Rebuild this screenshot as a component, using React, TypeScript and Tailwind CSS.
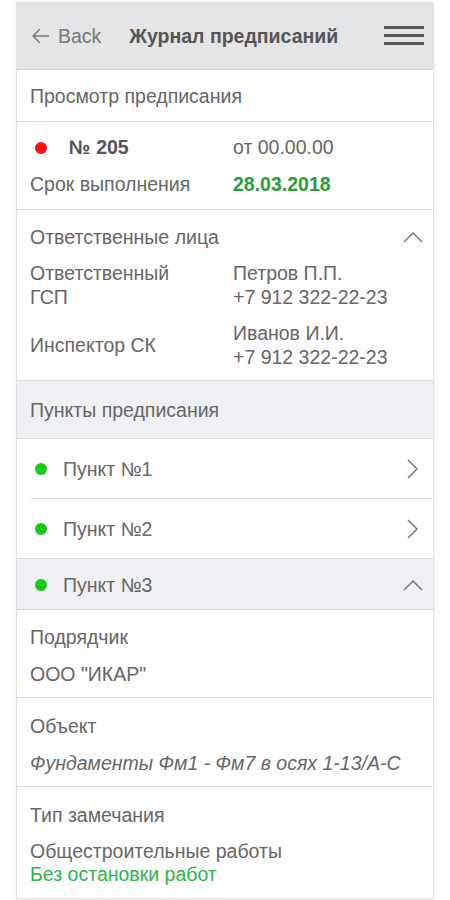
import React from "react";

const Dot = ({ color }: { color: string }) => (
  <span className={`inline-block w-[12px] h-[12px] rounded-full ${color}`} />
);

const ChevronUp = () => (
  <svg width="20" height="12" viewBox="0 0 20 12" fill="none">
    <path d="M1 11 L10 2 L19 11" stroke="#777" strokeWidth="1.5" />
  </svg>
);

const ChevronRight = () => (
  <svg width="12" height="20" viewBox="0 0 12 20" fill="none">
    <path d="M2 1 L11 10 L2 19" stroke="#777" strokeWidth="1.5" />
  </svg>
);

export default function App() {
  return (
    <div
      className="w-[450px] h-[900px] bg-white pt-[2px] px-[16px] overflow-hidden"
      style={{ fontFamily: '"Liberation Sans", Arial, sans-serif' }}
    >
      <div className="border-x border-b border-[#e2e2e2] text-[#666] text-[19.5px] leading-[24px] shadow-[0_0_3px_rgba(0,0,0,0.08)]">
        {/* Header */}
        <div className="h-[68px] bg-[#e4e5e7] flex items-center border-b border-[#d2d3d5]">
          <div className="flex items-center pl-[15px] text-[#777] text-[19.5px]">
            <svg width="18" height="16" viewBox="0 0 18 16" fill="none" className="mr-[8px]">
              <path d="M17 8 H2 M8 1 L1 8 L8 15" stroke="#777" strokeWidth="1.5" />
            </svg>
            <span>Back</span>
          </div>
          <div className="ml-[28px] text-[#555] font-bold text-[19.5px]">Журнал предписаний</div>
          <div className="ml-auto mr-[9px] flex flex-col gap-[5px]">
            <span className="block w-[40px] h-[3px] bg-[#555]" />
            <span className="block w-[40px] h-[3px] bg-[#555]" />
            <span className="block w-[40px] h-[3px] bg-[#555]" />
          </div>
        </div>

        {/* Просмотр */}
        <div className="h-[52px] flex items-center pl-[13px] pt-[1px] border-b border-[#dcdcdc]">
          Просмотр предписания
        </div>

        {/* Card */}
        <div className="pt-[13px] pb-[13px] pl-[13px] border-b border-[#dcdcdc] flex flex-col gap-[13px]">
          <div className="grid grid-cols-[203px_1fr] items-center">
            <div className="flex items-center">
              <span className="ml-[5px]"><Dot color="bg-[#ff1010]" /></span>
              <span className="ml-[22px] font-bold text-[#555]">№ 205</span>
            </div>
            <div>от 00.00.00</div>
          </div>
          <div className="grid grid-cols-[203px_1fr] items-center">
            <div>Срок выполнения</div>
            <div className="font-bold text-[#2a9d3a]">28.03.2018</div>
          </div>
        </div>

        {/* Ответственные лица */}
        <div className="pt-[15px] pb-[11px] pl-[13px] border-b border-[#dcdcdc]">
          <div className="flex items-center justify-between pr-[10px]">
            <span>Ответственные лица</span>
            <ChevronUp />
          </div>
          <div className="mt-[12px] grid grid-cols-[203px_1fr] items-center gap-y-[12px]">
            <div>Ответственный<br />ГСП</div>
            <div>Петров П.П.<br />+7 912 322-22-23</div>
            <div>Инспектор СК</div>
            <div>Иванов И.И.<br />+7 912 322-22-23</div>
          </div>
        </div>

        {/* Пункты предписания */}
        <div className="h-[58px] bg-[#eff0f4] flex items-center pl-[13px] pt-[1px] border-b border-[#dcdcdc]">
          Пункты предписания
        </div>

        <div className="h-[59px] flex items-center pl-[18px] pr-[15px]">
          <Dot color="bg-[#11cc11]" />
          <span className="ml-[16px]">Пункт №1</span>
          <span className="ml-auto"><ChevronRight /></span>
        </div>
        <div className="ml-[14px] border-b border-[#dcdcdc]" />
        <div className="h-[60px] flex items-center pl-[18px] pr-[15px] pt-[1px] border-b border-[#dcdcdc]">
          <Dot color="bg-[#11cc11]" />
          <span className="ml-[16px]">Пункт №2</span>
          <span className="ml-auto"><ChevronRight /></span>
        </div>
        <div className="h-[51px] bg-[#eff0f4] flex items-center pl-[18px] pr-[10px] pt-[2px] border-b border-[#d4d4d4]">
          <Dot color="bg-[#11cc11]" />
          <span className="ml-[16px]">Пункт №3</span>
          <span className="ml-auto"><ChevronUp /></span>
        </div>

        {/* Подрядчик */}
        <div className="pt-[15px] pb-[11px] pl-[13px] border-b border-[#dcdcdc] flex flex-col gap-[13px]">
          <div>Подрядчик</div>
          <div>ООО "ИКАР"</div>
        </div>

        {/* Объект */}
        <div className="pt-[16px] pb-[11px] pl-[13px] border-b border-[#dcdcdc] flex flex-col gap-[13px]">
          <div>Объект</div>
          <div className="italic">Фундаменты Фм1 - Фм7 в осях 1-13/А-С</div>
        </div>

        {/* Тип замечания */}
        <div className="pt-[16px] pb-[12px] pl-[13px] flex flex-col">
          <div>Тип замечания</div>
          <div className="mt-[12px]">Общестроительные работы</div>
          <div className="text-[#2db34a] -mt-[1px]">Без остановки работ</div>
        </div>
      </div>
    </div>
  );
}
